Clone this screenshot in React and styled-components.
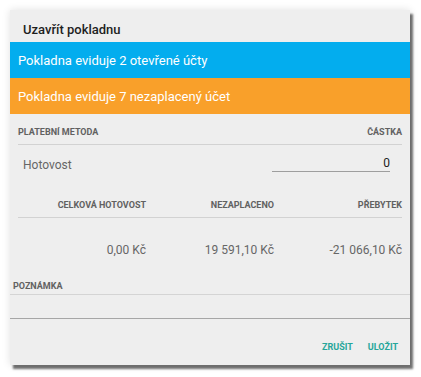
import React from 'react'
import styled, { createGlobalStyle } from 'styled-components'

const Global = createGlobalStyle`
  body {
    margin: 0;
    background: #ffffff;
    font-family: Roboto, "Noto Sans", "Liberation Sans", sans-serif;
  }
`

const Page = styled.div`
  padding: 10px;
`

const Dialog = styled.div`
  width: 400px;
  height: 355px;
  background: #eeeeee;
  box-shadow: 3px 4px 2px rgba(0, 0, 0, 0.55), 0 0 8px rgba(0, 0, 0, 0.12);
  display: flex;
  flex-direction: column;
`

const Title = styled.div`
  height: 32px;
  padding: 6px 0 0 13px;
  box-sizing: border-box;
  display: flex;
  align-items: center;
  font-size: 13px;
  font-weight: 500;
  color: #1e1e1e;
`

const Banner = styled.div`
  height: 36px;
  padding-left: 8px;
  display: flex;
  align-items: center;
  background: ${p => p.color};
  color: #ffffff;
  font-size: 13px;
`

const Section = styled.div`
  padding: 0 8px;
`

const HeaderRow = styled.div`
  height: ${p => p.h}px;
  display: grid;
  grid-template-columns: ${p => p.cols};
  align-items: end;
  padding-bottom: 6px;
  box-sizing: border-box;
  border-bottom: 1px solid #d2d2d2;
  font-size: 9px;
  line-height: 11px;
  font-weight: 700;
  color: #616161;
`

const Cell = styled.div`
  text-align: ${p => p.align || 'left'};
`

const MethodRow = styled.div`
  height: 40px;
  padding: 0 12px 0 5px;
  display: flex;
  align-items: center;
  justify-content: space-between;
  font-size: 12px;
  color: #666666;
`

const AmountInput = styled.div`
  width: 118px;
  height: 16px;
  margin-bottom: 2px;
  border-bottom: 1.5px solid #9e9e9e;
  text-align: right;
  font-size: 12px;
  line-height: 14px;
  color: #212121;
  box-sizing: border-box;
`

const ValueRow = styled.div`
  height: 46px;
  display: grid;
  grid-template-columns: 1fr 1fr 1fr;
  align-items: center;
  padding-top: 17px;
  box-sizing: border-box;
  font-size: 12px;
  color: #666666;
`

const NoteLabel = styled.div`
  height: 31px;
  padding: 0 0 2px 3px;
  box-sizing: border-box;
  display: flex;
  align-items: flex-end;
  border-bottom: 1px solid #d4d4d4;
  font-size: 9px;
  line-height: 11px;
  font-weight: 700;
  color: #616161;
`

const NoteInput = styled.div`
  height: 24px;
  border-bottom: 1.5px solid #a6a6a6;
  box-sizing: border-box;
`

const Actions = styled.div`
  flex: 1;
  display: flex;
  justify-content: flex-end;
  align-items: center;
  gap: 15px;
  padding: 10px 12px 0 0;
`

const ActionButton = styled.div`
  font-size: 9px;
  font-weight: 700;
  color: #26a69a;
`

export default function App() {
  return (
    <Page>
      <Global />
      <Dialog>
        <Title>Uzavřít pokladnu</Title>
        <Banner color="#03adee">Pokladna eviduje 2 otevřené účty</Banner>
        <Banner color="#f9a02a">Pokladna eviduje 7 nezaplacený účet</Banner>
        <Section>
          <HeaderRow h={31} cols="1fr 1fr">
            <Cell>PLATEBNÍ METODA</Cell>
            <Cell align="right">ČÁSTKA</Cell>
          </HeaderRow>
          <MethodRow>
            <span>Hotovost</span>
            <AmountInput>0</AmountInput>
          </MethodRow>
          <HeaderRow h={33} cols="1fr 1fr 1fr">
            <Cell align="right">CELKOVÁ HOTOVOST</Cell>
            <Cell align="right">NEZAPLACENO</Cell>
            <Cell align="right">PŘEBYTEK</Cell>
          </HeaderRow>
          <ValueRow>
            <Cell align="right">0,00 Kč</Cell>
            <Cell align="right">19 591,10 Kč</Cell>
            <Cell align="right">-21 066,10 Kč</Cell>
          </ValueRow>
        </Section>
        <NoteLabel>POZNÁMKA</NoteLabel>
        <NoteInput />
        <Actions>
          <ActionButton>ZRUŠIT</ActionButton>
          <ActionButton>ULOŽIT</ActionButton>
        </Actions>
      </Dialog>
    </Page>
  )
}
